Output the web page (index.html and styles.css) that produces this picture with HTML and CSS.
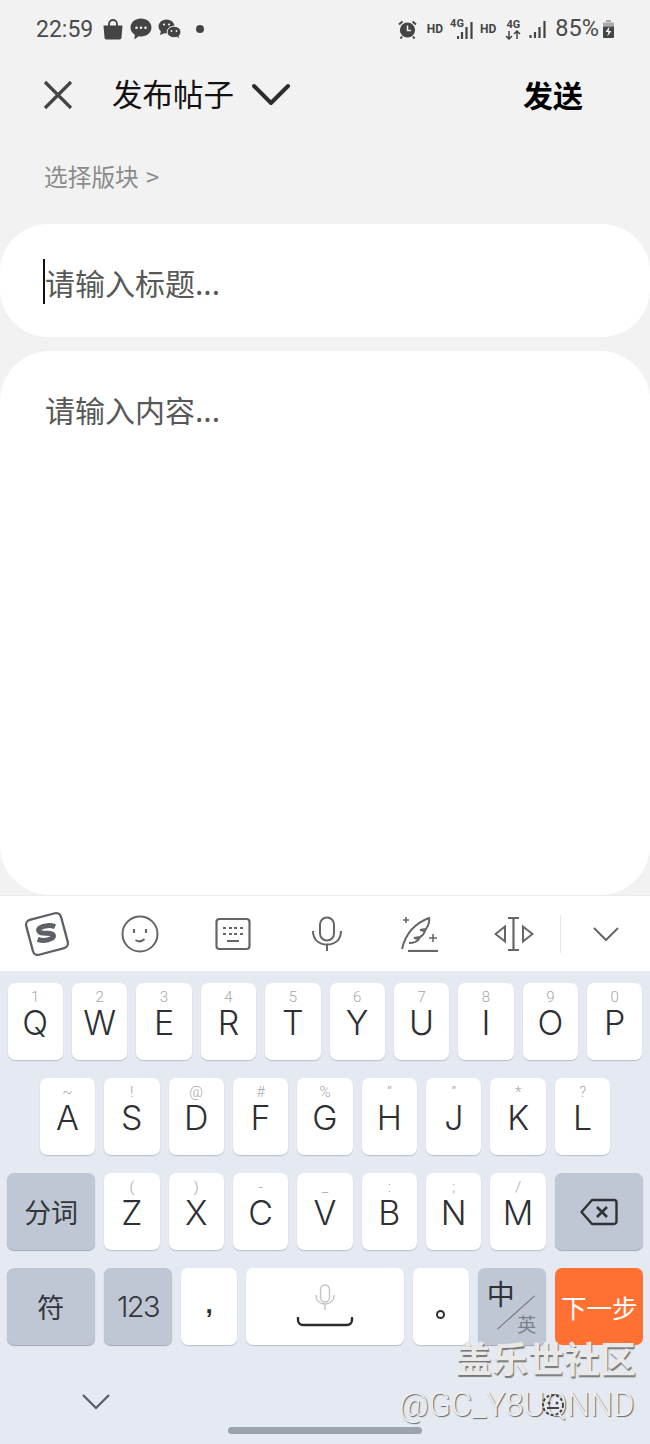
FILE: index.html
```html
<!DOCTYPE html>
<html lang="zh">
<head>
<meta charset="utf-8">
<title>发布帖子</title>
<link rel="stylesheet" href="styles.css">
</head>
<body>
<div class="screen">
  <div class="status">
    <div class="status-left">
      <span class="time">22:59</span>
      <svg class="ic-bag" width="20" height="21" viewBox="0 0 20 21"><path d="M6 8V5a4 4 0 0 1 8 0v3" fill="none" stroke="#444" stroke-width="1.800"/><path d="M.5 6.500h19l-1 12a2 2 0 0 1-2 2H3.500a2 2 0 0 1-2-2z" fill="#444"/></svg>
      <svg class="ic-bubble" width="22" height="22" viewBox="0 0 22 22"><path d="M11 .5c5.800 0 10.500 3.900 10.500 9s-4.700 9-10.500 9c-1 0-1.500 0-2.500-.2L4.500 21.500l.2-5C2 15 .5 12.500.5 9.500c0-5.100 4.700-9 10.500-9z" fill="#444"/><circle cx="6.500" cy="9.700" r="1.300" fill="#f2f2f2"/><circle cx="11" cy="9.700" r="1.300" fill="#f2f2f2"/><circle cx="15.500" cy="9.700" r="1.300" fill="#f2f2f2"/></svg>
      <svg class="ic-wechat" width="23" height="20" viewBox="0 0 23 20"><ellipse cx="8.500" cy="7.500" rx="8" ry="7" fill="#444"/><path d="M3 12l-1 4 5-2z" fill="#444"/><ellipse cx="16" cy="13" rx="7" ry="5.800" fill="#444" stroke="#f2f2f2" stroke-width="1"/><path d="M19 17.500l2 2-.5-3.500z" fill="#444"/><circle cx="6" cy="5.500" r="1.100" fill="#f2f2f2"/><circle cx="11" cy="5.500" r="1.100" fill="#f2f2f2"/><circle cx="13.500" cy="12" r=".9" fill="#f2f2f2"/><circle cx="18.500" cy="12" r=".9" fill="#f2f2f2"/></svg>
      <span class="dot"></span>
    </div>
    <div class="status-right">
      <svg class="ic-alarm" width="19" height="19" viewBox="0 0 19 19"><circle cx="9.500" cy="10" r="7.600" fill="#444"/><path d="M9.500 5.500V10.500H13" fill="none" stroke="#f2f2f2" stroke-width="1.500"/><path d="M1 4.500L4.500 1.500M18 4.500L14.500 1.500M4 16.500L2.500 18.500M15 16.500l1.500 2" stroke="#444" stroke-width="2"/></svg>
      <span class="hd hd-a">HD</span>
      <span class="net net-a">
        <span class="g4 g4-a">4G</span>
        <svg width="17" height="20" viewBox="0 0 17 20"><path d="M1 16v3M5 12v7M9.500 7v12M14.500 2v17" stroke="#444" stroke-width="2.200" fill="none"/></svg>
      </span>
      <span class="hd hd-b">HD</span>
      <span class="net-b">
        <span class="g4">4G</span>
        <svg width="16" height="10" viewBox="0 0 16 10"><path d="M4 1v8M1 6l3 3 3-3M12 9V1M9 4l3-3 3 3" fill="none" stroke="#444" stroke-width="1.500"/></svg>
      </span>
      <svg class="ic-bars" width="18" height="20" viewBox="0 0 18 20"><path d="M1.500 16v3M6 13v6M10.500 8v11M15.500 2v17" stroke="#444" stroke-width="2.200" fill="none"/></svg>
      <span class="pct">85%</span>
      <svg class="ic-batt" width="13" height="20" viewBox="0 0 13 20"><path d="M4 1h5v2H4z" fill="#aaa"/><path d="M1 3.500h11v4H1z" fill="#aaa"/><path d="M1 7.500h11V18a1 1 0 0 1-1 1H2a1 1 0 0 1-1-1z" fill="#444"/><path d="M7.500 7.500L3.500 13h2.800l-1 4.500L9.500 12H6.800z" fill="#f2f2f2"/></svg>
    </div>
  </div>

  <header class="head">
    <svg class="ic-close" width="30" height="30" viewBox="0 0 30 30"><path d="M2 2l26 26M28 2L2 28" stroke="#444" stroke-width="3.200" fill="none"/></svg>
    <h1 class="title">发布帖子</h1>
    <svg class="ic-drop" width="38" height="24" viewBox="0 0 38 24"><path d="M2 3l17 17L36 3" stroke="#2c2c2c" stroke-width="4" fill="none" stroke-linecap="round" stroke-linejoin="round"/></svg>
    <span class="send">发送</span>
  </header>

  <div class="board">选择版块 &gt;</div>

  <div class="card title-card"><span class="caret"></span><span class="ph">请输入标题...</span></div>
  <div class="card body-card"><span class="ph">请输入内容...</span></div>

  <div class="toolbar">
    <span class="tool">
      <svg width="46" height="46" viewBox="0 0 46 46"><rect x="5" y="5" width="36" height="36" rx="5" fill="#fff" stroke="#5d6066" stroke-width="2.300" transform="rotate(-15 23 23)"/><path d="M32 17c-4-2.500-11-3-15-1-3 1.500-2 4.500 2 5.500l7 1.500c4 1 4 3.500 1 5-4 1.500-10 1-14-1" fill="none" stroke="#5d6066" stroke-width="5" transform="rotate(-8 23 23)"/></svg>
    </span>
    <span class="tool">
      <svg width="38" height="38" viewBox="0 0 38 38"><circle cx="19" cy="19" r="17.500" fill="none" stroke="#666" stroke-width="2"/><path d="M13 14v4M25 14v4" stroke="#666" stroke-width="2.200"/><path d="M14.500 25c3 2 6.500 1.500 9-1" fill="none" stroke="#666" stroke-width="2"/></svg>
    </span>
    <span class="tool">
      <svg width="36" height="34" viewBox="0 0 36 34"><rect x="1.500" y="2" width="33" height="30" rx="3" fill="none" stroke="#666" stroke-width="2.200"/><path d="M8 11h3M14 11h3M19 11h3M25 11h3M8 17h3M14 17h3M19 17h3M25 17h3M12 24h12" stroke="#666" stroke-width="1.800" fill="none"/></svg>
    </span>
    <span class="tool">
      <svg width="32" height="36" viewBox="0 0 32 36"><rect x="9" y="1.500" width="14" height="23" rx="7" fill="none" stroke="#666" stroke-width="2"/><path d="M2 15c0 9 6 13.500 14 13.500S30 24 30 15M16 28.500V35" fill="none" stroke="#666" stroke-width="2"/></svg>
    </span>
    <span class="tool">
      <svg width="38" height="36" viewBox="0 0 38 36"><path d="M1 33C4 20 12 8 28 2c1 4-1 8-3 11l-6 1 5 1c-1 3-3 5-5 6l-6 1 5 1c-2 3-6 4-10 4" fill="none" stroke="#666" stroke-width="2"/><path d="M7 35h30" stroke="#666" stroke-width="2.200"/><path d="M2 4h6M5 1v6M28 22h8M32 18v8" stroke="#666" stroke-width="1.600"/></svg>
    </span>
    <span class="tool">
      <svg width="40" height="34" viewBox="0 0 40 34"><path d="M14 1h11M19.500 1v32M14 33h11" stroke="#666" stroke-width="2.200" fill="none"/><path d="M11 9.500v15L1.500 17zM29 9.500v15L38.500 17z" fill="none" stroke="#666" stroke-width="2"/></svg>
    </span>
    <span class="divider"></span>
    <svg class="ic-fold" width="28" height="16" viewBox="0 0 28 16"><path d="M2 2l12 12L26 2" fill="none" stroke="#666" stroke-width="2"/></svg>
  </div>

  <div class="keyboard">
    <div class="row">
      <div class="key"><span class="hint">1</span><span class="cap">Q</span></div>
      <div class="key"><span class="hint">2</span><span class="cap">W</span></div>
      <div class="key"><span class="hint">3</span><span class="cap">E</span></div>
      <div class="key"><span class="hint">4</span><span class="cap">R</span></div>
      <div class="key"><span class="hint">5</span><span class="cap">T</span></div>
      <div class="key"><span class="hint">6</span><span class="cap">Y</span></div>
      <div class="key"><span class="hint">7</span><span class="cap">U</span></div>
      <div class="key"><span class="hint">8</span><span class="cap">I</span></div>
      <div class="key"><span class="hint">9</span><span class="cap">O</span></div>
      <div class="key"><span class="hint">0</span><span class="cap">P</span></div>
    </div>
    <div class="row">
      <div class="key"><span class="hint">~</span><span class="cap">A</span></div>
      <div class="key"><span class="hint">!</span><span class="cap">S</span></div>
      <div class="key"><span class="hint">@</span><span class="cap">D</span></div>
      <div class="key"><span class="hint">#</span><span class="cap">F</span></div>
      <div class="key"><span class="hint">%</span><span class="cap">G</span></div>
      <div class="key"><span class="hint">“</span><span class="cap">H</span></div>
      <div class="key"><span class="hint">”</span><span class="cap">J</span></div>
      <div class="key"><span class="hint">*</span><span class="cap">K</span></div>
      <div class="key"><span class="hint">?</span><span class="cap">L</span></div>
    </div>
    <div class="row">
      <div class="key fn wide"><span class="cjk">分词</span></div>
      <div class="key"><span class="hint">(</span><span class="cap">Z</span></div>
      <div class="key"><span class="hint">)</span><span class="cap">X</span></div>
      <div class="key"><span class="hint">-</span><span class="cap">C</span></div>
      <div class="key"><span class="hint">_</span><span class="cap">V</span></div>
      <div class="key"><span class="hint">:</span><span class="cap">B</span></div>
      <div class="key"><span class="hint">;</span><span class="cap">N</span></div>
      <div class="key"><span class="hint">/</span><span class="cap">M</span></div>
      <div class="key fn wide">
        <svg width="38" height="28" viewBox="0 0 38 28"><path d="M12 2h22a2.500 2.500 0 0 1 2.500 2.500v19A2.500 2.500 0 0 1 34 26H12L1.500 14z" fill="none" stroke="#2f3236" stroke-width="2.400" stroke-linejoin="round"/><path d="M17 9l10 10M27 9L17 19" stroke="#2f3236" stroke-width="2.600"/></svg>
      </div>
    </div>
    <div class="row">
      <div class="key fn wide"><span class="cjk">符</span></div>
      <div class="key fn mid"><span class="num">123</span></div>
      <div class="key"><span class="punct">,</span></div>
      <div class="key space">
        <svg class="ic-smic" width="20" height="28" viewBox="0 0 20 28"><rect x="5.500" y="1" width="9" height="17" rx="4.500" fill="none" stroke="#c4c4c4" stroke-width="1.400"/><path d="M1 11c0 6 4 9 9 9s9-3 9-9M10 20v6" fill="none" stroke="#c4c4c4" stroke-width="1.400"/></svg>
        <svg width="58" height="10" viewBox="0 0 58 10"><path d="M2 1v2a5 5 0 0 0 5 5h44a5 5 0 0 0 5-5V1" fill="none" stroke="#2a2a2a" stroke-width="2.400" stroke-linecap="round"/></svg>
      </div>
      <div class="key"><span class="circle"></span></div>
      <div class="key fn mid lang">
        <span class="lang-a">中</span>
        <span class="slash"></span>
        <span class="lang-b">英</span>
      </div>
      <div class="key go wide">下一步</div>
    </div>
    <div class="foot">
      <svg class="ic-hide" width="30" height="18" viewBox="0 0 30 18"><path d="M2 2l13 13L28 2" fill="none" stroke="#555b63" stroke-width="2.200"/></svg>
      <span class="pill"></span>
    </div>
  </div>

  <div class="wm-a">盖乐世社区</div>
  <div class="wm-b">@GC_Y8UQNND</div>
  <svg class="wm-face" width="24" height="24" viewBox="0 0 24 24"><circle cx="12" cy="12" r="10" fill="none" stroke="#444" stroke-width="2" stroke-dasharray="3 2"/><circle cx="8" cy="10" r="1.500" fill="#444"/><circle cx="16" cy="10" r="1.500" fill="#444"/><path d="M6 15h12" stroke="#444" stroke-width="2"/></svg>
</div>
</body>
</html>
```

FILE: styles.css
```css
* { box-sizing: border-box; }
html, body { margin: 0; padding: 0; }
body {
  width: 650px;
  height: 1444px;
  overflow: hidden;
  background: #f2f2f2;
  font-family: "Liberation Sans", "Noto Sans CJK SC", sans-serif;
}
.screen {
  position: relative;
  width: 650px;
  height: 1444px;
  display: flex;
  flex-direction: column;
  overflow: hidden;
}

/* status bar */
.status {
  flex: none;
  height: 58px;
  display: flex;
  justify-content: space-between;
  align-items: center;
  padding: 0 35px 0 36px;
}
.status-left, .status-right { display: flex; align-items: center; }
.time {
  font: 400 23px/1 Roboto, sans-serif;
  color: #4a4a4a;
  width: 57px;
}
.ic-bag { margin-left: 10px; }
.ic-bubble { margin-left: 7px; }
.ic-wechat { margin-left: 6px; }
.dot {
  width: 8px; height: 8px;
  border-radius: 50%;
  background: #444;
  margin-left: 15px;
}
.hd { font: 700 12px/1 Roboto, sans-serif; color: #444; }
.hd-a { margin-left: 10px; }
.hd-b { margin-left: 6px; }
.net { position: relative; display: block; }
.net-a { width: 24px; height: 22px; margin-left: 7px; display: flex; justify-content: flex-end; align-items: flex-end; }
.g4 { font: 700 11px/1 Roboto, sans-serif; color: #444; display: block; }
.g4-a { position: absolute; left: 0; top: 0; }
.net-b { display: flex; flex-direction: column; align-items: center; width: 16px; margin-left: 9px; }
.ic-bars { margin-left: 8px; }
.pct { font: 400 23.500px/1 Roboto, sans-serif; color: #4a4a4a; margin-left: 8px; }
.ic-batt { margin-left: 3px; }

/* header */
.head {
  flex: none;
  height: 74px;
  display: flex;
  align-items: center;
  padding-left: 43px;
}
.title {
  margin: -4px 0 0 39px;
  font: 400 30.500px/1 "Noto Sans CJK SC", sans-serif;
  color: #111;
}
.ic-drop { margin-left: 18px; margin-top: -1px; }
.send {
  margin-left: auto;
  margin-right: 67px;
  margin-top: -3px;
  font: 700 30px/1 "Noto Sans CJK SC", sans-serif;
  color: #000;
}
.board {
  flex: none;
  height: 92px;
  padding: 28px 0 0 44px;
  font: 400 23.700px/32px "Noto Sans CJK SC", sans-serif;
  word-spacing: 2px;
  color: #8c8c8c;
}

/* cards */
.card { background: #fff; flex: none; }
.title-card {
  height: 113px;
  border-radius: 48px;
  display: flex;
  align-items: center;
  padding-left: 43px;
}
.caret {
  width: 2px;
  height: 45px;
  background: #111;
  margin-top: 2px;
}
.ph {
  font: 400 30px/1 "Noto Sans CJK SC", sans-serif;
  color: #585858;
}
.title-card .ph { margin-top: 2px; }
.body-card {
  flex: 1;
  margin-top: 14px;
  border-radius: 50px;
  padding: 43px 0 0 45px;
}

/* toolbar */
.toolbar {
  flex: none;
  height: 76px;
  background: #fff;
  border-top: 1px solid #ececec;
  display: flex;
  align-items: center;
}
.tool {
  flex: none;
  width: 93.400px;
  display: flex;
  justify-content: center;
}
.divider {
  width: 1px;
  height: 38px;
  background: #e6e6e6;
}
.ic-fold { margin-left: 31px; }

/* keyboard */
.keyboard {
  flex: none;
  height: 473px;
  background: #e5e9f1;
  padding-top: 12px;
  display: flex;
  flex-direction: column;
}
.row {
  flex: none;
  height: 77px;
  margin-bottom: 18px;
  display: flex;
  justify-content: center;
  gap: 9px;
}
.key {
  flex: none;
  width: 55.400px;
  height: 77px;
  border-radius: 7px;
  background: #fff;
  box-shadow: 0 1px 1px #b9bfca;
  display: flex;
  flex-direction: column;
  align-items: center;
  justify-content: flex-start;
  padding-top: 6px;
}
.hint {
  height: 16px;
  font: 300 15px/16px Roboto, sans-serif;
  color: #a5a5a5;
}
.cap {
  font: 300 34px/36px Inter, "Liberation Sans", sans-serif;
  color: #2d2f33;
}
.fn {
  background: #bfc7d5;
  box-shadow: 0 1px 1px #a0a7b5;
  justify-content: center;
  padding-top: 0;
}
.wide { width: 88px; }
.mid { width: 68.500px; }
.cjk { font: 400 27px/1 "Noto Sans CJK SC", sans-serif; color: #33363a; }
.num { font: 300 29px/1 Inter, "Liberation Sans", sans-serif; letter-spacing: -1.500px; color: #33363a; }
.punct { font: 700 26px/60px "Liberation Sans", sans-serif; color: #2d2f33; }
.space { width: 158.600px; justify-content: flex-start; padding-top: 16px; gap: 5px; }
.ic-smic { display: block; }
.circle {
  width: 9px; height: 9px;
  margin-top: 36px;
  border-radius: 50%;
  border: 2px solid #2d2f33;
}
.lang { position: relative; display: block; padding: 0; }
.lang-a {
  position: absolute; left: 9px; top: 11px;
  font: 400 28px/1 "Noto Sans CJK SC", sans-serif;
  color: #2f3236;
}
.lang-b {
  position: absolute; right: 10px; top: 46px;
  font: 400 19px/1 "Noto Sans CJK SC", sans-serif;
  color: #7b808a;
}
.slash {
  position: absolute; left: 13px; top: 44px;
  width: 50px; height: 1px;
  background: #6d7079;
  transform: rotate(-42deg);
}
.go {
  background: #ff7033;
  box-shadow: none;
  color: #fff;
  justify-content: center;
  padding-top: 0;
  font: 400 25.500px/1 "Noto Sans CJK SC", sans-serif;
}
.foot {
  flex: 1;
  display: flex;
  flex-direction: column;
  margin-top: -18px;
}
.ic-hide { margin: 48px 0 0 81px; flex: none; }
.pill {
  align-self: center;
  width: 194px;
  height: 7px;
  margin-top: 16px;
  border-radius: 4px;
  background: #9ca3ad;
}

/* watermark */
.wm-a {
  position: absolute;
  left: 456px; top: 1336px;
  font: 700 36px/1.200 "Noto Sans CJK SC", sans-serif;
  color: #e9e9e9;
  text-shadow: 1px 2px 1px #777;
  white-space: nowrap;
}
.wm-b {
  position: absolute;
  left: 399px; top: 1386px;
  font: 300 32.500px/1.200 Roboto, sans-serif;
  color: #eeeeee;
  text-shadow: 1px 1px 1px #666;
  white-space: nowrap;
}
.wm-face { position: absolute; left: 541px; top: 1393px; }
```
